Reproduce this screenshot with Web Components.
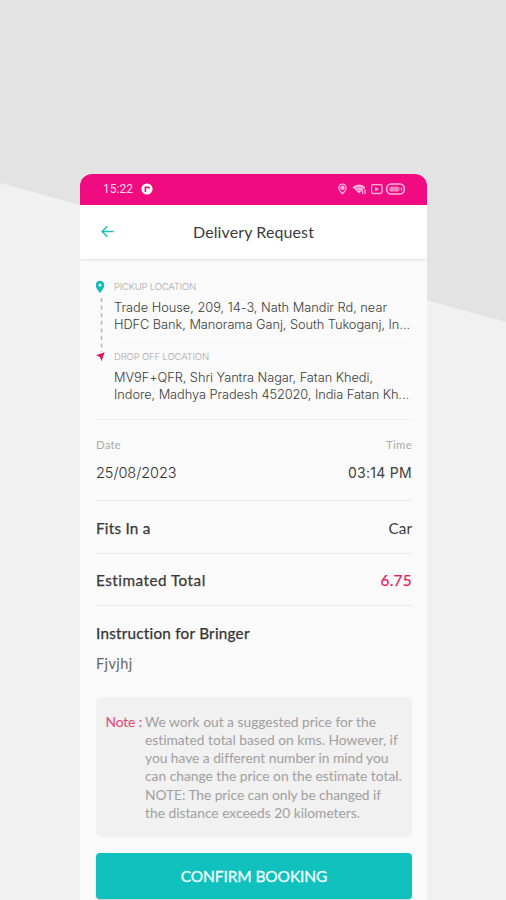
<!DOCTYPE html>
<html lang="en">
<head>
<meta charset="utf-8">
<title>Delivery Request</title>
<style>
html, body { margin: 0; height: 100%; overflow: hidden; }
body { font-family: Lato, "Liberation Sans", sans-serif; color: #333; }
</style>
</head>
<body>
<delivery-page></delivery-page>
<script>
const define = (name, html, setup) => {
  const template = document.createElement('template');
  template.innerHTML = html;
  customElements.define(name, class extends HTMLElement {
    constructor() {
      super();
      this.attachShadow({ mode: 'open' }).append(template.content.cloneNode(true));
    }
    connectedCallback() { if (setup) setup(this); }
  });
};

/* One line of text, tracked so that it fills the width given in its attribute. */
define('text-line', `<style>:host{display:block;width:max-content;white-space:pre}</style><slot></slot>`, el => {
  const target = parseFloat(el.getAttribute('width'));
  if (!target) return;
  const now = el.getBoundingClientRect().width;
  const gap = (target - now) / el.textContent.length;
  el.style.letterSpacing = gap.toFixed(3) + 'px';
});

define('status-bar', `<style>
:host{display:flex;box-sizing:border-box;height:30.5px;align-items:center;padding:0 22px 0 23px;background:#f10b80;color:#ffd9ec;font:400 12px/30px Roboto,sans-serif}
svg{display:block}.app{margin-left:8px}.icons{margin-left:auto}
</style>
<text-line width="30">15:22</text-line>
<svg class="app" width="12" height="12" viewBox="0 0 12 12"><circle cx="6" cy="6" r="5.6" fill="#fff"/><path d="M4.4 9V4.2h2.4q1.6 0 1.4 1.5" fill="none" stroke="#e00d7a" stroke-width="1.6"/></svg>
<svg class="icons" width="68" height="14" viewBox="0 0 68 14" fill="none" stroke="#ffb5dc" stroke-width="1.3">
<path d="M5.500 11.800C3 9.200 1.900 7.800 1.900 5.700a3.600 3.600 0 0 1 7.200 0C9.100 7.800 8 9.200 5.500 11.800Z"/><circle cx="5.500" cy="5.700" r="1.500" fill="#ffb5dc"/>
<path d="M15.500 5.200q6.500-5.500 13 0L22 11.500Z" fill="#ffb5dc" stroke="none"/><path d="M18 6.500q4-3 8 0M20 8.500q2-1.500 4 0" stroke="#f10b80" stroke-width=".5"/><path d="M25.500 12V8.500M28 12V7.500"/>
<rect x="34.600" y="2.700" width="10.400" height="8.800" rx="1.500"/><path d="m38.200 4.900 3.600 2.200-3.600 2.300Z" fill="#ffb5dc" stroke="none"/>
<rect x="49.700" y="2" width="17.600" height="10" rx="4.500" stroke-width="1.600"/><rect x="52.200" y="4.400" width="10.500" height="5.200" rx="2" fill="#f76caf" stroke="none"/><path d="M54 5.500h2v1.500h-2v2h2M58 5.500h2v3.500h-2Z" stroke-width=".6"/><path d="M64.500 5.500v3"/>
</svg>`);

define('app-header', `<style>
:host{display:grid;grid-template-columns:40px 1fr 40px;align-items:center;box-sizing:border-box;height:55.5px;background:#fff;border-bottom:1px solid #e8e8e8;box-shadow:0 1px 2px #0000000d;color:#3c3c3c;font-size:16px;line-height:24px}
svg{display:block;margin-left:21px}text-line{justify-self:center;padding-top:1px}
</style>
<svg width="13" height="13" viewBox="0 0 13 13" fill="none" stroke="#20bfb5" stroke-width="1.500" stroke-linecap="round" stroke-linejoin="round"><path d="M12 6.500H1M6 1.700 1 6.500l5 4.800"/></svg>
<text-line width="121">Delivery Request</text-line>`);

define('route-stop', `<style>
:host{display:block}
.label{color:#a8a8a8;font:300 9.5px/14px Inter,sans-serif}
.address{color:#3c3c3c;font:300 12.8px/16.500px Inter,sans-serif;margin-top:6px}
</style><div class="label"><slot name="label"></slot></div><div class="address"><slot></slot></div>`);

define('route-card', `<style>
:host{display:grid;grid-template-columns:18px 1fr;height:160px;padding-top:20px;box-sizing:border-box;border-bottom:1px solid #eee}
svg{display:block}
.stops{display:flex;flex-direction:column}
hr{width:100%;height:1px;border:0;margin:8px 0;background:#f6f6f6}
</style>
<svg width="18" height="84" viewBox="0 0 18 84"><path d="M4 .8a4.300 4.300 0 0 0-4.300 4.300C-.3 8.500 4 13 4 13s4.300-4.500 4.300-7.900A4.300 4.300 0 0 0 4 .8Z" fill="#10bdb5"/><circle cx="4" cy="5" r="1.500" fill="#f0ffff"/><path d="M5.500 18v54" stroke="#b9b9b9" stroke-width="1.500" stroke-dasharray="4 3.600"/><path d="m8.700 72.300-3.200 9-1.600-4.300L0 75.300Z" fill="#e01561"/></svg>
<div class="stops">
<route-stop><text-line slot="label" width="82">PICKUP LOCATION</text-line><text-line width="273">Trade House, 209, 14-3, Nath Mandir Rd, near</text-line><text-line width="296">HDFC Bank, Manorama Ganj, South Tukoganj, In...</text-line></route-stop>
<hr>
<route-stop><text-line slot="label" width="95">DROP OFF LOCATION</text-line><text-line width="259">MV9F+QFR, Shri Yantra Nagar, Fatan Khedi,</text-line><text-line width="295">Indore, Madhya Pradesh 452020, India Fatan Kh...</text-line></route-stop>
</div>`);

define('date-time', `<style>
:host{display:flex;justify-content:space-between;box-sizing:border-box;height:81px;padding-top:16px;border-bottom:1px solid #eaeaea}
.end{display:flex;flex-direction:column;align-items:flex-end}
.cap{font-size:11.300px;line-height:18px;color:#aaa}
.value{font:300 14.500px/22px Inter,sans-serif;margin-top:8px;color:#303030}
.end .value{font-weight:400;color:#404040;font-size:14px}
</style>
<div><text-line class="cap" width="25">Date</text-line><text-line class="value" width="80.500">25/08/2023</text-line></div>
<div class="end"><text-line class="cap" width="26">Time</text-line><text-line class="value" width="64">03:14 PM</text-line></div>`);

define('info-row', `<style>
:host{display:flex;justify-content:space-between;align-items:center;box-sizing:border-box;height:52.500px;padding-top:2px;border-bottom:1px solid #eaeaea;font-size:15.300px;line-height:22px;color:#3a3a3a}
::slotted([slot=label]){-webkit-text-stroke:.25px #333}
</style><slot name="label"></slot><slot></slot>`);

define('instruction-block', `<style>
:host{display:block;height:91px;padding-top:16px;box-sizing:border-box;font-size:15.300px;line-height:22px}
.title{-webkit-text-stroke:.25px #333}.text{margin-top:9px;font-size:14.500px;color:#666}
</style><text-line class="title" width="154">Instruction for Bringer</text-line><text-line class="text" width="36.500">Fjvjhj</text-line>`);

define('note-box', `<style>
:host{display:flex;gap:3px;height:140px;box-sizing:border-box;padding:15.500px 9.500px;border-radius:5px;background:#f1f1f1;font-size:13.800px;line-height:18.300px;color:#a0a0a0}
.tag{color:#e34b7d;-webkit-text-stroke:.1px #e34b7d}
</style>
<text-line class="tag" width="36.500">Note :</text-line>
<div>
<text-line width="231">We work out a suggested price for the</text-line>
<text-line width="253">estimated total based on kms. However, if</text-line>
<text-line width="243">you have a different number in mind you</text-line>
<text-line width="257">can change the price on the estimate total.</text-line>
<text-line width="236">NOTE: The price can only be changed if</text-line>
<text-line width="215">the distance exceeds 20 kilometers.</text-line>
</div>`);

define('confirm-button', `<style>
:host{display:flex;justify-content:center;align-items:center;height:46px;margin-top:16px;border-radius:4px;background:#10c1bd;color:#f2ffff;font-size:15.500px;box-shadow:0 1px 2px #0003;-webkit-text-stroke:.3px #f2ffff}
</style><text-line width="146.500">CONFIRM BOOKING</text-line>`);

define('phone-screen', `<style>
:host{display:block;width:347px;height:726px;border-radius:12px 12px 0 0;overflow:hidden;background:#fafafa}
main{padding:0 15px 0 16px}
</style>
<status-bar></status-bar><app-header></app-header>
<main>
<route-card></route-card><date-time></date-time>
<info-row><text-line slot="label" width="54.500">Fits In a</text-line><text-line width="23.500">Car</text-line></info-row>
<info-row><text-line slot="label" width="110">Estimated Total</text-line><text-line width="31.500" style="color:#e0245f;-webkit-text-stroke:.25px #e0245f">6.75</text-line></info-row>
<instruction-block></instruction-block><note-box></note-box><confirm-button></confirm-button>
</main>`);

define('delivery-page', `<style>
:host{display:block;box-sizing:border-box;width:506px;height:900px;padding:174px 0 0 80px;overflow:hidden;background:url("data:image/svg+xml,%3Csvg xmlns='http://www.w3.org/2000/svg' width='506' height='900'%3E%3Cpath fill='%23e3e3e3' d='M0 0h506v900H0z'/%3E%3Cpath fill='%23f1f1f1' d='M0 183L506 322V900H0z'/%3E%3C/svg%3E")}
</style><phone-screen></phone-screen>`);
</script>
</body>
</html>
